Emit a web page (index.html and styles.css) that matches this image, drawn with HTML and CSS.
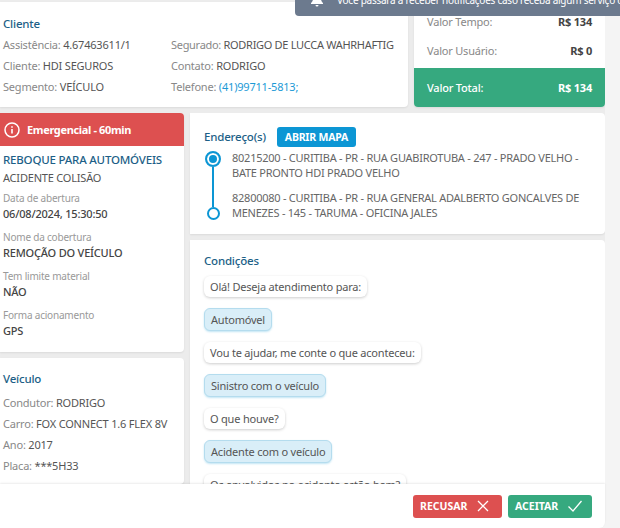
FILE: index.html
```html
<!DOCTYPE html>
<html lang="pt-BR">
<head>
<meta charset="utf-8">
<title>Serviço</title>
<link rel="stylesheet" href="styles.css">
</head>
<body>
<div class="page">
  <div class="content">
    <div class="row top">
      <section class="card client">
        <h3 class="title">Cliente</h3>
        <div class="client-cols">
          <div class="col-a">
            <p class="line"><span class="k">Assistência:</span> 4.67463611/1</p>
            <p class="line"><span class="k">Cliente:</span> HDI SEGUROS</p>
            <p class="line"><span class="k">Segmento:</span> VEÍCULO</p>
          </div>
          <div class="col-b">
            <p class="line tight"><span class="k">Segurado:</span> RODRIGO DE LUCCA WAHRHAFTIG</p>
            <p class="line"><span class="k">Contato:</span> RODRIGO</p>
            <p class="line"><span class="k">Telefone:</span> <a class="tel">(41)99711-5813;</a></p>
          </div>
        </div>
      </section>
      <section class="card values">
        <div class="val-rows">
          <div class="val"><span class="k">Valor Tempo:</span><b>R$ 134</b></div>
          <div class="val"><span class="k">Valor Usuário:</span><b>R$ 0</b></div>
        </div>
        <div class="total"><span>Valor Total:</span><b>R$ 134</b></div>
      </section>
    </div>
    <div class="row main">
      <div class="left">
        <section class="card info">
          <div class="alert">
            <svg class="alert-ico" viewBox="0 0 16 16" width="16" height="16"><circle cx="8" cy="8" r="7" fill="none" stroke="#fff" stroke-width="1.5"/><path d="M8 7v4.5M8 4.2v1.6" stroke="#fff" stroke-width="1.6" fill="none"/></svg>
            <span>Emergencial - 60min</span>
          </div>
          <div class="info-body">
            <h3 class="title up">REBOQUE PARA AUTOMÓVEIS</h3>
            <p class="sub">ACIDENTE COLISÃO</p>
            <div class="field"><span class="lab">Data de abertura</span><span class="v">06/08/2024, 15:30:50</span></div>
            <div class="field"><span class="lab">Nome da cobertura</span><span class="v">REMOÇÃO DO VEÍCULO</span></div>
            <div class="field"><span class="lab">Tem limite material</span><span class="v">NÃO</span></div>
            <div class="field"><span class="lab">Forma acionamento</span><span class="v">GPS</span></div>
          </div>
        </section>
        <section class="card vehicle">
          <h3 class="title">Veículo</h3>
          <p class="line"><span class="k">Condutor:</span> RODRIGO</p>
          <p class="line"><span class="k">Carro:</span> FOX CONNECT 1.6 FLEX 8V</p>
          <p class="line"><span class="k">Ano:</span> 2017</p>
          <p class="line"><span class="k">Placa:</span> ***5H33</p>
        </section>
      </div>
      <div class="right">
        <section class="card address">
          <div class="addr-head">
            <h3 class="title">Endereço(s)</h3>
            <span class="map-btn">ABRIR MAPA</span>
          </div>
          <div class="addr-list">
            <div class="addr">
              <div class="rail"><span class="dot on"></span><span class="bar"></span></div>
              <p>80215200 - CURITIBA - PR - RUA GUABIROTUBA - 247 - PRADO VELHO - BATE PRONTO HDI PRADO VELHO</p>
            </div>
            <div class="addr">
              <div class="rail end"><span class="bar"></span><span class="dot"></span></div>
              <p>82800080 - CURITIBA - PR - RUA GENERAL ADALBERTO GONCALVES DE MENEZES - 145 - TARUMA - OFICINA JALES</p>
            </div>
          </div>
        </section>
        <section class="card cond">
          <h3 class="title">Condições</h3>
          <div class="chat">
            <span class="bubble">Olá! Deseja atendimento para:</span>
            <span class="bubble ans">Automóvel</span>
            <span class="bubble">Vou te ajudar, me conte o que aconteceu:</span>
            <span class="bubble ans">Sinistro com o veículo</span>
            <span class="bubble">O que houve?</span>
            <span class="bubble ans">Acidente com o veículo</span>
            <span class="bubble">Os envolvidos no acidente estão bem?</span>
          </div>
        </section>
      </div>
    </div>
  </div>
  <footer class="footer">
    <button class="btn refuse">RECUSAR
      <svg viewBox="0 0 14 14" width="14" height="14"><path d="M2 2l10 10M12 2L2 12" stroke="#fff" stroke-width="1.3" fill="none"/></svg>
    </button>
    <button class="btn accept">ACEITAR
      <svg viewBox="0 0 16 14" width="16" height="14"><path d="M1.500 7.500l4.500 4.500L14.500 2" stroke="#fff" stroke-width="1.300" fill="none"/></svg>
    </button>
  </footer>
  <div class="toast">
    <svg viewBox="0 0 14 14" width="14" height="14"><path d="M7 0c-2.600 0-4 2-4 4.500 0 2.500-1 3.500-2 4.500v1h12V9c-1-1-2-2-2-4.500C11 2 9.600 0 7 0zM5.500 11a1.500 1.500 0 0 0 3 0z" fill="#fff"/></svg>
    <span>Você passará a receber notificações caso receba algum serviço ou</span>
  </div>
</div>
</body>
</html>
```
FILE: styles.css
```css
* { box-sizing: border-box; }
html, body { margin: 0; padding: 0; }
body {
  width: 620px;
  height: 528px;
  overflow: hidden;
  background: #f4f4f4;
  font-family: "Noto Sans", sans-serif;
  font-size: 11px;
  letter-spacing: -0.2px;
  color: #555;
}
p, h3 { margin: 0; }
.page { position: relative; width: 620px; height: 528px; display: flex; flex-direction: column; overflow: hidden; }
.content { height: 484px; width: 605px; overflow: hidden; padding-top: 2px; background: #ececec; display: flex; flex-direction: column; gap: 6px; }
.row { display: flex; gap: 6px; }
.card { background: #fff; border-radius: 0 4px 4px 0; box-shadow: 0 1px 2px rgba(0,0,0,.08); }
.title { font-size: 11.500px; font-weight: 500; color: #1d5f87; line-height: 16px; }
.line { font-size: 11px; line-height: 21px; color: #555; white-space: nowrap; }
.tight { letter-spacing: -0.3px; }
.k { color: #888; }
.top { height: 105px; flex: none; }
.client { width: 408px; padding: 14px 3px 0; }
.client .title { margin-bottom: 2px; }
.client-cols { display: flex; }
.col-a { width: 168px; }
.tel { color: #1c9ad6; }
.values { width: 191px; display: flex; flex-direction: column; border-radius: 0 0 4px 4px; }
.val-rows { flex: 1; padding: 5px 13px 0; }
.val { display: flex; justify-content: space-between; line-height: 29px; color: #444; }
.val b { font-weight: 700; }
.total { height: 39px; background: #36a97f; color: #fff; font-weight: 500; display: flex; align-items: center; justify-content: space-between; padding: 0 13px; border-radius: 0 0 4px 4px; }
.main { flex: 1; min-height: 0; overflow: hidden; }
.left { width: 184px; flex: none; display: flex; flex-direction: column; gap: 6px; }
.alert { height: 33px; background: #dd5050; color: #fff; font-weight: 700; font-size: 11px; letter-spacing: -0.35px; display: flex; align-items: center; gap: 7px; padding-left: 4px; border-radius: 0 4px 0 0; }
.alert-ico { flex: none; }
.info { height: 239px; flex: none; }
.info-body { padding: 6px 3px; }
.up { line-height: 16px; }
.sub { font-size: 11px; line-height: 20px; color: #555; margin-bottom: 3px; }
.field { display: flex; flex-direction: column; margin-bottom: 8px; }
.lab { font-size: 10px; line-height: 14px; color: #999; }
.v { font-size: 11px; line-height: 17px; color: #444; font-weight: 500; }
.vehicle { flex: 1; padding: 13px 3px 0; }
.vehicle .title { margin-bottom: 5px; }
.right { flex: 1; min-width: 0; display: flex; flex-direction: column; gap: 6px; }
.address { height: 121px; flex: none; padding: 14px 14px 0; }
.addr-head { display: flex; align-items: center; gap: 11px; margin-bottom: 3px; }
.map-btn { height: 20px; line-height: 20px; padding: 0 8px; background: #0c96d4; color: #fff; font-weight: 700; font-size: 10.500px; border-radius: 3px; }
.addr-list { display: flex; flex-direction: column; }
.addr { display: flex; gap: 10px; }
.addr p { font-size: 11px; line-height: 15px; color: #666; letter-spacing: -0.25px; padding-bottom: 10px; }
.rail { width: 18px; flex: none; display: flex; flex-direction: column; align-items: center; padding-top: 1px; }
.rail.end { padding-top: 0; padding-bottom: 10px; }
.bar { width: 2px; flex: 1; background: #0c96d4; }
.dot { width: 13px; height: 13px; border-radius: 50%; border: 2px solid #0c96d4; background: #fff; flex: none; }
.dot.on { width: 16px; height: 16px; box-shadow: inset 0 0 0 2px #fff, inset 0 0 0 8px #0c96d4; }
.cond { flex: 1; padding: 13px 14px 0; }
.chat { display: flex; flex-direction: column; align-items: flex-start; gap: 11px; margin-top: 7px; }
.bubble { height: 21px; line-height: 21px; padding: 0 6px; background: #fff; border-radius: 6px; box-shadow: 0 1px 3px rgba(0,0,0,.2); font-size: 11px; color: #555; white-space: nowrap; }
.ans { height: 23px; line-height: 22px; background: #d9eef8; border: 1px solid #b4dcee; box-shadow: 0 1px 2px rgba(12,150,212,.25); }
.footer { height: 44px; width: 605px; flex: none; background: #fff; border-radius: 0 0 6px 0; display: flex; justify-content: flex-end; align-items: center; gap: 6px; padding-right: 13px; box-shadow: 0 -1px 2px rgba(0,0,0,.08); }
.btn { height: 23px; border: 0; border-radius: 3px; color: #fff; font-family: inherit; font-weight: 700; font-size: 10.500px; display: flex; align-items: center; gap: 9px; padding: 0 7px; }
.refuse { width: 89px; background: #dd5050; }
.accept { width: 84px; background: #36a97f; }
.toast { position: absolute; left: 295px; top: -8px; width: 340px; height: 24px; padding: 0 0 9px 15px; background: #6c7a8e; border-radius: 4px; color: #fff; font-size: 10px; letter-spacing: -0.25px; display: flex; align-items: flex-end; gap: 13px; white-space: nowrap; }
.toast svg { flex: none; margin-bottom: -1px; }
```
